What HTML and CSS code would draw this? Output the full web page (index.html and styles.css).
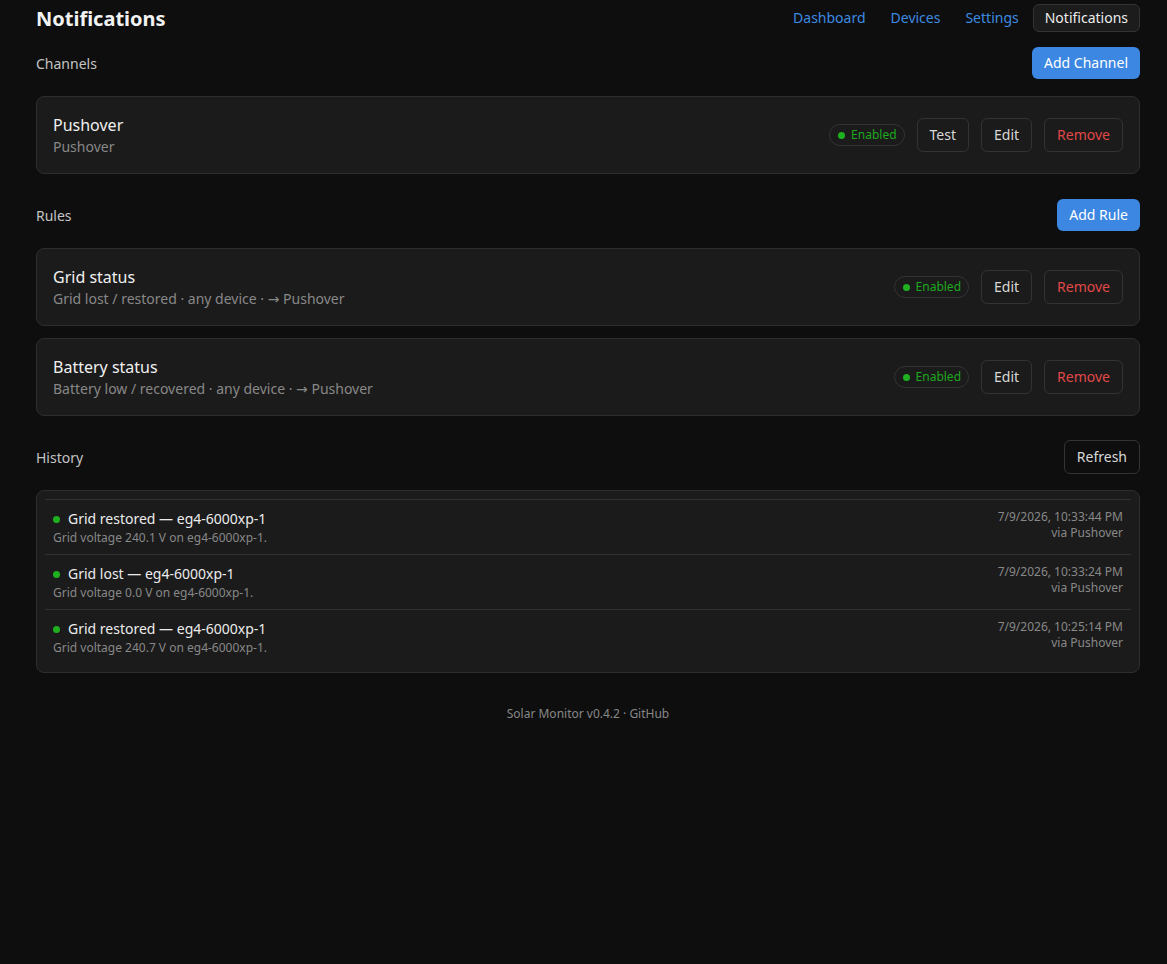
FILE: index.html
```html
<!DOCTYPE html>
<html lang="en">
<head>
    <meta charset="UTF-8">
    <meta name="viewport" content="width=device-width, initial-scale=1.0">
    <title>Notifications</title>
    <link rel="stylesheet" href="styles.css">
</head>
<body>
    <div class="page">
        <header class="topbar">
            <h1>Notifications</h1>
            <nav class="nav">
                <a href="#">Dashboard</a>
                <a href="#">Devices</a>
                <a href="#">Settings</a>
                <a href="#" class="active">Notifications</a>
            </nav>
        </header>

        <section class="section">
            <div class="section-head">
                <h2>Channels</h2>
                <button class="btn primary">Add Channel</button>
            </div>
            <div class="card">
                <div class="card-text">
                    <div class="card-title">Pushover</div>
                    <div class="card-sub">Pushover</div>
                </div>
                <div class="card-actions">
                    <span class="badge"><span class="dot"></span>Enabled</span>
                    <button class="btn">Test</button>
                    <button class="btn">Edit</button>
                    <button class="btn danger">Remove</button>
                </div>
            </div>
        </section>

        <section class="section">
            <div class="section-head">
                <h2>Rules</h2>
                <button class="btn primary">Add Rule</button>
            </div>
            <div class="card">
                <div class="card-text">
                    <div class="card-title">Grid status</div>
                    <div class="card-sub">Grid lost / restored · any device · <span class="arrow">→</span> Pushover</div>
                </div>
                <div class="card-actions">
                    <span class="badge"><span class="dot"></span>Enabled</span>
                    <button class="btn">Edit</button>
                    <button class="btn danger">Remove</button>
                </div>
            </div>
            <div class="card">
                <div class="card-text">
                    <div class="card-title">Battery status</div>
                    <div class="card-sub">Battery low / recovered · any device · <span class="arrow">→</span> Pushover</div>
                </div>
                <div class="card-actions">
                    <span class="badge"><span class="dot"></span>Enabled</span>
                    <button class="btn">Edit</button>
                    <button class="btn danger">Remove</button>
                </div>
            </div>
        </section>

        <section class="section">
            <div class="section-head">
                <h2>History</h2>
                <button class="btn">Refresh</button>
            </div>
            <div class="card history">
                <div class="history-row">
                    <div class="history-main">
                        <div class="history-title"><span class="dot"></span>Grid restored — eg4-6000xp-1</div>
                        <div class="history-sub">Grid voltage 240.1 V on eg4-6000xp-1.</div>
                    </div>
                    <div class="history-meta">
                        <div>7/9/2026, 10:33:44 PM</div>
                        <div>via Pushover</div>
                    </div>
                </div>
                <div class="history-row">
                    <div class="history-main">
                        <div class="history-title"><span class="dot"></span>Grid lost — eg4-6000xp-1</div>
                        <div class="history-sub">Grid voltage 0.0 V on eg4-6000xp-1.</div>
                    </div>
                    <div class="history-meta">
                        <div>7/9/2026, 10:33:24 PM</div>
                        <div>via Pushover</div>
                    </div>
                </div>
                <div class="history-row">
                    <div class="history-main">
                        <div class="history-title"><span class="dot"></span>Grid restored — eg4-6000xp-1</div>
                        <div class="history-sub">Grid voltage 240.7 V on eg4-6000xp-1.</div>
                    </div>
                    <div class="history-meta">
                        <div>7/9/2026, 10:25:14 PM</div>
                        <div>via Pushover</div>
                    </div>
                </div>
            </div>
        </section>

        <footer class="footer">Solar Monitor v0.4.2 · GitHub</footer>
    </div>
</body>
</html>
```

FILE: styles.css
```css
body {
    font-family: "Noto Sans", "Open Sans", sans-serif;
    background-color: #0e0e0e;
    color: #e6e6e6;
    margin: 0;
}
.page {
    padding: 4px 27px 40px 36px;
}
.topbar {
    display: flex;
    justify-content: space-between;
    align-items: center;
    height: 28px;
}
.topbar h1 {
    margin: 0;
    font-size: 20px;
    font-weight: 700;
    color: #f2f2f2;
}
.nav {
    display: flex;
    gap: 3px;
}
.nav a {
    color: #3d8be0;
    text-decoration: none;
    font-size: 14px;
    padding: 3px 10px;
    line-height: 20px;
    border: 1px solid transparent;
    border-radius: 6px;
}
.nav a.active {
    color: #ececec;
    background-color: #1c1c1c;
    border-color: #333;
    padding: 3px 11px;
}
.section {
    margin-top: 14px;
}
.section + .section {
    margin-top: 24px;
}
.section-head {
    display: flex;
    justify-content: space-between;
    align-items: center;
    min-height: 34px;
    margin-bottom: 16px;
}
.section-head h2 {
    margin: 0;
    font-size: 14px;
    font-weight: 400;
    color: #c4c4c4;
}
.btn {
    font-family: inherit;
    font-size: 14px;
    line-height: 20px;
    color: #d8d8d8;
    background: transparent;
    border: 1px solid #333;
    border-radius: 6px;
    padding: 6px 12px;
    cursor: pointer;
}
.btn.primary {
    background-color: #3b87e2;
    border: none;
    color: #fff;
}
.btn.danger {
    color: #e04848;
}
.card {
    display: flex;
    justify-content: space-between;
    align-items: center;
    background-color: #1b1b1b;
    border: 1px solid #2e2e2e;
    border-radius: 8px;
    padding: 16px;
    margin-bottom: 12px;
}
.card-title {
    font-size: 16px;
    line-height: 24px;
    color: #f0f0f0;
}
.card-sub {
    font-size: 14px;
    line-height: 20px;
    color: #888;
}
.arrow {
    font-family: "DejaVu Sans", sans-serif;
    font-size: 14px;
}
.card-actions {
    display: flex;
    align-items: center;
    gap: 12px;
}
.badge {
    display: inline-flex;
    align-items: center;
    gap: 6px;
    font-size: 12px;
    color: #1ea81e;
    border: 1px solid #333;
    border-radius: 999px;
    padding: 2px 7px 2px 8px;
    line-height: 16px;
}
.dot {
    display: inline-block;
    width: 7px;
    height: 7px;
    border-radius: 50%;
    background-color: #1fb01f;
}
.history {
    display: block;
    padding: 8px;
}
.history-row {
    display: flex;
    justify-content: space-between;
    border-top: 1px solid #303030;
    padding: 9px 8px 8px;
}
.history-title {
    font-size: 14px;
    line-height: 20px;
    color: #ececec;
    display: flex;
    align-items: center;
    gap: 8px;
}
.history-sub, .history-meta {
    font-size: 12px;
    line-height: 16px;
    color: #888;
}
.history-sub {
    margin-top: 1px;
}
.history-meta {
    text-align: right;
}
.footer {
    text-align: center;
    font-size: 12px;
    color: #888;
    margin-top: 32px;
}
```
